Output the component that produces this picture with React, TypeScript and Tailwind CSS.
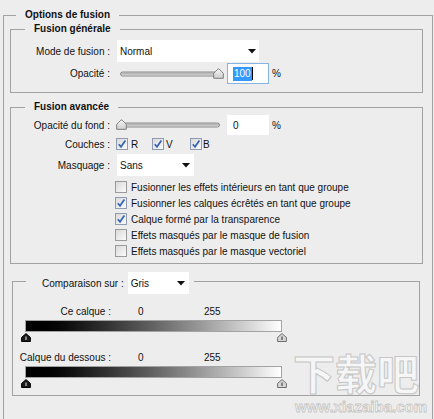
import React from 'react';

function Arrow() {
  return (
    <svg width="8" height="5" viewBox="0 0 8 5" className="shrink-0">
      <polygon points="0,0 8,0 4,4.5" fill="#111" />
    </svg>
  );
}

function Dropdown({ value, className }: { value: string; className: string }) {
  return (
    <div className={`flex items-center justify-between bg-white pl-[3px] ${className}`}>
      <span>{value}</span>
      <Arrow />
    </div>
  );
}

function Check({ checked }: { checked?: boolean }) {
  return (
    <span
      className={`relative flex h-[12px] w-[12px] shrink-0 items-center justify-center border bg-gradient-to-br from-[#d9d9d9] to-[#fbfbfb] ${
        checked ? 'border-[#8e9bb0]' : 'border-[#9a9a9a]'
      }`}
    >
      {checked && (
        <svg width="10" height="10" viewBox="0 0 10 10">
          <path d="M1.8 5.2 L4 7.8 L8.4 1.6" fill="none" stroke="#3563b4" strokeWidth="1.7" />
        </svg>
      )}
    </span>
  );
}

function SliderThumb() {
  return (
    <svg width="11" height="11" viewBox="0 0 11 11">
      <defs>
        <linearGradient id="st" x1="0" y1="0" x2="0" y2="1">
          <stop offset="0" stopColor="#f4f4f4" />
          <stop offset="1" stopColor="#cfcfcf" />
        </linearGradient>
      </defs>
      <path d="M5.5 0.8 Q6.2 0.8 10.3 5.4 L10.3 10.3 L0.7 10.3 L0.7 5.4 Q4.8 0.8 5.5 0.8 Z" fill="url(#st)" stroke="#7c7c7c" />
    </svg>
  );
}

function Slider({ thumbLeft, thumbTop }: { thumbLeft: string; thumbTop: string }) {
  return (
    <div className="relative h-full w-[108px]">
      <div className="absolute left-[3px] top-1/2 h-[5px] w-[100px] -translate-y-1/2 rounded-full border border-[#8a8a8a] bg-gradient-to-b from-[#a9a9a9] to-[#d8d8d8]" />
      <div className={`absolute ${thumbLeft} ${thumbTop}`}>
        <SliderThumb />
      </div>
    </div>
  );
}

function RangeThumb({ dark }: { dark?: boolean }) {
  return (
    <svg width="10" height="9" viewBox="0 0 10 9">
      <path
        d="M5 0.6 L9.4 4.4 L9.4 8.5 L0.6 8.5 L0.6 4.4 Z"
        fill={dark ? '#1a1a1a' : '#d6d6d6'}
        stroke={dark ? '#000' : '#6e6e6e'}
      />
      <line x1="5" y1="3.5" x2="5" y2="7" stroke={dark ? '#eee' : '#333'} />
    </svg>
  );
}

function Range({ label, mt }: { label: string; mt: string }) {
  return (
    <>
      <div className={`flex h-[14px] items-center ${mt}`}>
        <span className="flex w-[98px] justify-end whitespace-nowrap">{label}</span>
        <span className="ml-[27px] w-[66px]">0</span>
        <span>255</span>
      </div>
      <div className="ml-[12px] mt-[2px] h-[12px] w-[257px] border border-[#a3a3a3] bg-gradient-to-r from-black to-white" />
      <div className="ml-[8px] mt-[1px] flex h-[9px] w-[266px] justify-between">
        <RangeThumb dark />
        <RangeThumb />
      </div>
    </>
  );
}

const options = [
  { label: 'Fusionner les effets intérieurs en tant que groupe', checked: false },
  { label: 'Fusionner les calques écrêtés en tant que groupe', checked: true },
  { label: 'Calque formé par la transparence', checked: true },
  { label: 'Effets masqués par le masque de fusion', checked: false },
  { label: 'Effets masqués par le masque vectoriel', checked: false },
];

export default function App() {
  return (
    <div className="relative h-[419px] w-[434px] overflow-hidden bg-[#ededed] font-['Liberation_Sans',_Arial,_sans-serif] text-[10px] text-[#111]">
      <div className="pl-[3px] pr-[1px] pt-[8px]">
        <fieldset className="border border-[#a2a2a2] pb-[40px] pl-[6px] pr-[9px]">
          <legend className="ml-[6px] px-[9px] font-bold leading-[14px]">Options de fusion</legend>

          {/* Fusion générale */}
          <fieldset className="border border-[#a2a2a2] pb-[8px]">
            <legend className="ml-[14px] px-[9px] font-bold leading-[14px]">Fusion générale</legend>
            <div className="mt-[4px] flex h-[22px] items-center">
              <span className="w-[99px] text-right">Mode de fusion :</span>
              <Dropdown value="Normal" className="ml-[7px] h-[22px] w-[142px] pr-[3px]" />
            </div>
            <div className="mt-[1px] flex h-[21px] items-center">
              <span className="w-[99px] text-right">Opacité :</span>
              <div className="ml-[7px] h-full">
                <Slider thumbLeft="left-[96px]" thumbTop="top-[5px]" />
              </div>
              <div className="ml-[2px] flex h-[21px] w-[42px] items-center border border-[#86b5e3] bg-white pl-[5px]">
                <span className="bg-[#3399ff] px-[1px] leading-[14px] text-white">100</span>
                <span className="h-[13px] w-[1px] bg-black" />
              </div>
              <span className="ml-[3px]">%</span>
            </div>
          </fieldset>

          {/* Fusion avancée */}
          <fieldset className="mt-[7px] border border-[#a2a2a2] pb-[4px]">
            <legend className="ml-[14px] px-[9px] font-bold leading-[14px]">Fusion avancée</legend>
            <div className="mt-[1px] flex h-[20px] items-center">
              <span className="w-[99px] text-right">Opacité du fond :</span>
              <div className="ml-[7px] h-full">
                <Slider thumbLeft="left-[-1px]" thumbTop="top-[4px]" />
              </div>
              <div className="ml-[2px] flex h-[20px] w-[42px] items-center bg-white pl-[6px]">0</div>
              <span className="ml-[3px]">%</span>
            </div>
            <div className="mt-[3px] flex h-[12px] items-center">
              <span className="w-[99px] text-right">Couches :</span>
              <div className="ml-[6px] flex w-[36px] items-center">
                <Check checked />
                <span className="ml-[3px]">R</span>
              </div>
              <div className="flex w-[38px] items-center">
                <Check checked />
                <span className="ml-[2px]">V</span>
              </div>
              <div className="flex items-center">
                <Check checked />
                <span className="ml-[1px]">B</span>
              </div>
            </div>
            <div className="mt-[4px] flex h-[22px] items-center">
              <span className="w-[99px] text-right">Masquage :</span>
              <Dropdown value="Sans" className="ml-[7px] h-[22px] w-[77px] pr-[4px]" />
            </div>
            <div className="mt-[3px] flex flex-col pl-[104px]">
              {options.map((o) => (
                <div key={o.label} className="flex h-[16px] items-center">
                  <Check checked={o.checked} />
                  <span className="ml-[4px]">{o.label}</span>
                </div>
              ))}
            </div>
          </fieldset>

          {/* Comparaison */}
          <div className="ml-[2px] mr-[3px] mt-[8px]">
            <fieldset className="border border-[#a2a2a2] pb-[7px]">
              <legend className="ml-[13px] flex h-[18px] items-start pl-[16px] pr-[5px]">
                <span className="flex h-[22px] items-center">Comparaison sur :</span>
                <Dropdown value="Gris" className="ml-[4px] h-[22px] w-[61px] pr-[4px]" />
              </legend>
              <Range label="Ce calque :" mt="mt-[14px]" />
              <Range label="Calque du dessous :" mt="mt-[8px]" />
            </fieldset>
          </div>
        </fieldset>
      </div>

      {/* watermark */}
      <div className="pointer-events-none absolute left-[293px] top-[351px] flex flex-col items-start">
        <span className="font-['Noto_Sans_CJK_SC',_sans-serif] text-[42px] font-bold leading-[42px] text-white/50 [-webkit-text-stroke:1px_#c6c6c6]">
          下载吧
        </span>
        <span className="ml-[2px] mt-[6px] text-[15px] font-bold leading-[15px] text-white/50 [-webkit-text-stroke:0.8px_#c6c6c6]">
          www.xiazaiba.com
        </span>
      </div>
    </div>
  );
}
